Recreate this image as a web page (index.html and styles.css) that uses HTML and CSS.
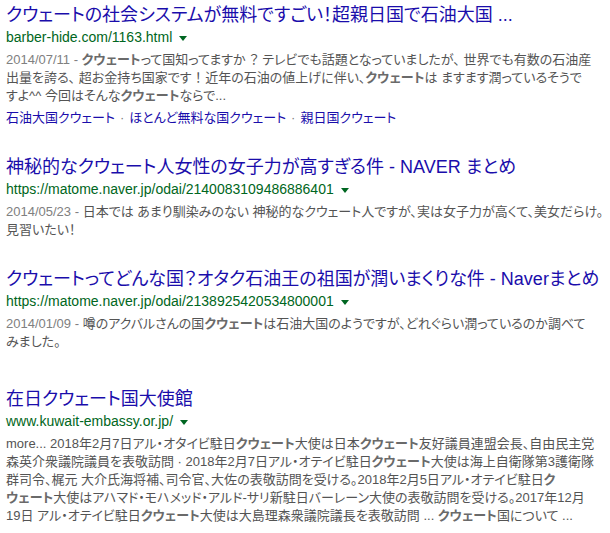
FILE: index.html
```html
<!DOCTYPE html>
<html>
<head>
    <meta charset="utf-8">
    <title>クウェート - 検索結果</title>
    <link rel="stylesheet" href="styles.css">
</head>
<body>
    <div id="results">
        <div class="result">
            <h3><a href="#">クウェートの社会システムが無料ですごい！超親日国で石油大国 ...</a></h3>
            <div class="url"><cite>barber-hide.com/1163.html</cite><span class="arrow"></span></div>
            <div class="snippet">
                <span class="date">2014/07/11 - </span><b>クウェート</b>って国知ってますか ？ テレビでも話題となっていましたが、 世界でも有数の石油産<br>
                出量を誇る、 超お金持ち国家です ！ 近年の石油の値上げに伴い、<b>クウェート</b>は ますます潤っているそうで<br>
                すよ^^ 今回はそんな<b>クウェート</b>ならで...
            </div>
            <div class="sitelinks">
                <a href="#">石油大国クウェート</a><span class="sep">·</span><a href="#">ほとんど無料な国クウェート</a><span class="sep">·</span><a href="#">親日国クウェート</a>
            </div>
        </div>

        <div class="result">
            <h3><a href="#">神秘的なクウェート人女性の女子力が高すぎる件 - NAVER まとめ</a></h3>
            <div class="url"><cite>https://matome.naver.jp/odai/2140083109486886401</cite><span class="arrow"></span></div>
            <div class="snippet">
                <span class="date">2014/05/23 - </span>日本では あまり馴染みのない 神秘的なクウェート人ですが、実は女子力が高くて、美女だらけ。<br>
                見習いたい！
            </div>
        </div>

        <div class="result">
            <h3><a href="#">クウェートってどんな国？オタク石油王の祖国が潤いまくりな件 - Naverまとめ</a></h3>
            <div class="url"><cite>https://matome.naver.jp/odai/2138925420534800001</cite><span class="arrow"></span></div>
            <div class="snippet">
                <span class="date">2014/01/09 - </span>噂のアクバルさんの国<b>クウェート</b>は石油大国のようですが、どれぐらい潤っているのか調べて<br>
                みました。
            </div>
        </div>

        <div class="result embassy">
            <h3><a href="#">在日クウェート国大使館</a></h3>
            <div class="url"><cite>www.kuwait-embassy.or.jp/</cite><span class="arrow"></span></div>
            <div class="snippet">
                more... 2018年2月7日アル・オタイビ駐日<b>クウェート</b>大使は日本<b>クウェート</b>友好議員連盟会長、自由民主党<br>
                森英介衆議院議員を表敬訪問 · 2018年2月7日アル・オテイビ駐日<b>クウェート</b>大使は海上自衛隊第3護衛隊<br>
                群司令、梶元 大介氏海将補、司令官、大佐の表敬訪問を受ける。2018年2月5日アル・オテイビ駐日<b>ク</b><br>
                <b>ウェート</b>大使はアハマド・モハメッド・アルド-サリ新駐日バーレーン大使の表敬訪問を受ける。2017年12月<br>
                19日 アル・オテイビ駐日<b>クウェート</b>大使は大島理森衆議院議長を表敬訪問 ... <b>クウェート</b>国について ...
            </div>
        </div>
    </div>
</body>
</html>
```

FILE: styles.css
```css
body {
    margin: 0;
    padding: 3px 6px;
    background: #fff;
    font-family: "Liberation Sans", Arial, "Noto Sans CJK JP", sans-serif;
    font-feature-settings: "palt";
    white-space: nowrap;
}
a { color: #1a0dab; text-decoration: none; }

.result { margin-bottom: 28px; }
.result.embassy { margin-top: 36px; }

h3 {
    margin: 0;
    font-size: 18px;
    font-weight: normal;
    line-height: 24px;
}
.url {
    height: 24px;
    line-height: 20px;
    font-size: 14px;
}
cite { font-style: normal; color: #006621; }
.arrow {
    display: inline-block;
    margin-left: 7px;
    vertical-align: middle;
    border-top: 5px solid #006621;
    border-left: 4px solid transparent;
    border-right: 4px solid transparent;
}

.snippet {
    font-size: 13px;
    line-height: 18px;
    color: #545454;
}
.snippet b { color: #6a6a6a; }
.date { color: #808080; }

.sitelinks {
    margin-top: 4px;
    font-size: 13px;
    line-height: 18px;
}
.sep { color: #808080; margin: 0 5px; }
```
